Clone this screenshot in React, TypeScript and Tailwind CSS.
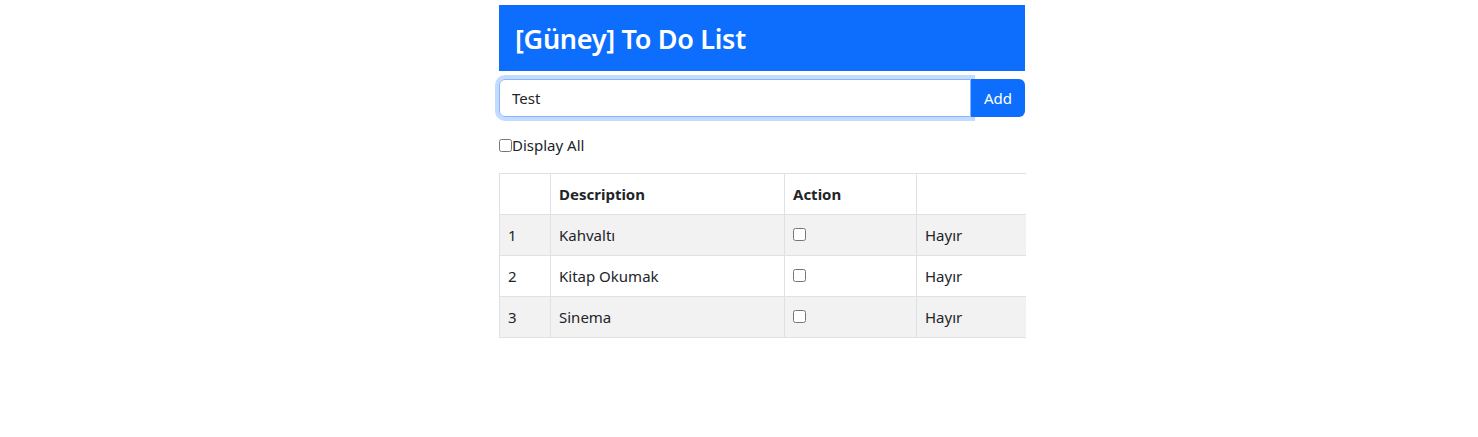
import React from 'react';

const items = [
  { id: 1, description: 'Kahvaltı', done: false },
  { id: 2, description: 'Kitap Okumak', done: false },
  { id: 3, description: 'Sinema', done: false },
];

export default function App() {
  return (
    <div className="min-h-screen bg-white pt-[5px] font-['Noto_Sans',sans-serif] text-[15px] leading-6 text-[#212529]">
      <div className="ml-[499px] w-[526px]">
        <div className="bg-[#0d6efd] px-4 pt-[17px] pb-[15px]">
          <h3 className="text-[27px] font-semibold leading-[34px] tracking-[-0.3px] text-white">[Güney] To Do List</h3>
        </div>

        <div className="mt-2 flex">
          <input
            defaultValue="Test"
            className="h-[38px] min-w-0 flex-1 rounded-l-md border border-[#86b7fe] px-3 text-[15px] text-[#212529] shadow-[0_0_0_4px_rgba(13,110,253,0.25)] outline-none"
          />
          <button className="h-[38px] w-[54px] rounded-r-md bg-[#0d6efd] text-[15px] text-white">Add</button>
        </div>

        <label className="mt-4 flex items-center">
          <input type="checkbox" className="m-0 h-[13px] w-[13px]" />
          <span>Display All</span>
        </label>

        <table className="mt-4 w-[526px] table-fixed border-collapse">
          <colgroup>
            <col className="w-[51px]" />
            <col className="w-[234px]" />
            <col className="w-[132px]" />
            <col className="w-[109px]" />
          </colgroup>
          <thead>
            <tr className="border-t border-[#dee2e6]">
              <th className="border-x border-[#dee2e6] p-2 text-left font-bold"></th>
              <th className="border-r border-[#dee2e6] p-2 text-left font-bold">Description</th>
              <th className="border-r border-[#dee2e6] p-2 text-left font-bold">Action</th>
              <th className="p-2 text-left font-bold"></th>
            </tr>
          </thead>
          <tbody>
            {items.map((item, i) => (
              <tr
                key={item.id}
                className={`border-t border-[#dee2e6] ${i % 2 === 0 ? 'bg-[#f2f2f2]' : 'bg-white'} ${i === items.length - 1 ? 'border-b' : ''}`}
              >
                <td className="border-x border-[#dee2e6] p-2">{item.id}</td>
                <td className="border-r border-[#dee2e6] p-2">{item.description}</td>
                <td className="border-r border-[#dee2e6] p-2 align-top">
                  <input type="checkbox" defaultChecked={item.done} className="m-0 mt-[5px] block h-[13px] w-[13px]" />
                </td>
                <td className="p-2">{item.done ? 'Evet' : 'Hayır'}</td>
              </tr>
            ))}
          </tbody>
        </table>
      </div>
    </div>
  );
}
